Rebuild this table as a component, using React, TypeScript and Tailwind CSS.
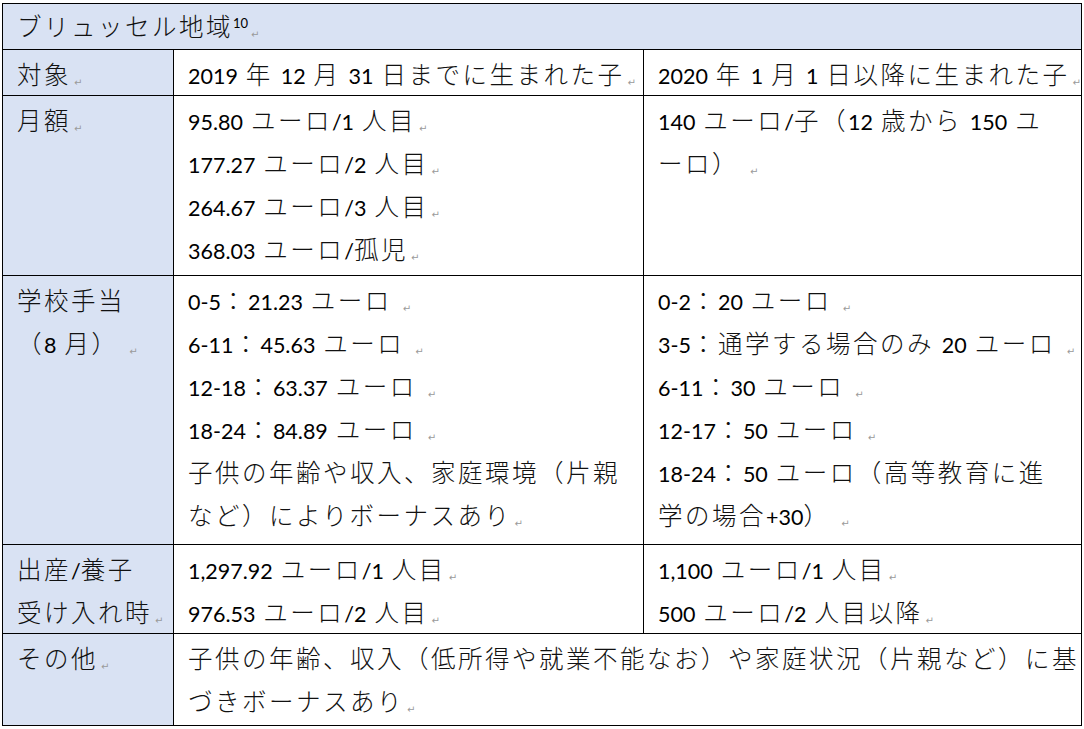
const LABEL = "bg-[#d9e2f3]";

// split a line into latin runs and CJK/space runs so each gets its own metrics
function Runs({ text }: { text: string }) {
  const parts = text.match(/[\x21-\x7e]+|[^\x21-\x7e]+/g) ?? [];
  return (
    <>
      {parts.map((p, i) =>
        /[\x21-\x7e]/.test(p[0]) ? (
          <span key={i} className="font-['Lato'] text-[21.5px] text-black">
            {p}
          </span>
        ) : (
          <span
            key={i}
            className="font-['Noto_Sans_CJK_JP'] text-[24.5px] font-light tracking-[2.5px] text-[#111]"
          >
            {p}
          </span>
        )
      )}
    </>
  );
}

function Mark() {
  return (
    <span className="ml-[3px] align-[-2px] font-['DejaVu_Sans'] text-[10px] text-[#9a9a9a]">
      ↵
    </span>
  );
}

function Line({ text, mark = true }: { text: string; mark?: boolean }) {
  return (
    <div className="h-[43px] whitespace-nowrap leading-[43px]">
      <Runs text={text} />
      {mark && <Mark />}
    </div>
  );
}

function Cell({
  lines,
  label = false,
  span = false,
}: {
  lines: [string, boolean?][];
  label?: boolean;
  span?: boolean;
}) {
  return (
    <div
      className={`${label ? LABEL : "bg-white"} ${span ? "col-span-2" : ""} pl-[14px] pt-[2px]`}
    >
      {lines.map(([t, m], i) => (
        <Line key={i} text={t} mark={m ?? true} />
      ))}
    </div>
  );
}

export default function App() {
  return (
    <div className="min-h-[729px] w-[1084px] bg-white pt-[3px] pl-[2px]">
      <div className="grid w-[1080px] grid-cols-[170px_469px_437px] grid-rows-[45px_45px_179px_268px_88px_91px] gap-px bg-black p-px">
        <div className={`${LABEL} col-span-3 pl-[14px]`}>
          <div className="h-[43px] whitespace-nowrap leading-[43px]">
            <Runs text="ブリュッセル地域" />
            <span className="relative -top-[8px] font-['Lato'] text-[13px]">
              10
            </span>
            <Mark />
          </div>
        </div>

        <Cell label lines={[["対象"]]} />
        <Cell lines={[["2019 年 12 月 31 日までに生まれた子"]]} />
        <Cell lines={[["2020 年 1 月 1 日以降に生まれた子"]]} />

        <Cell label lines={[["月額"]]} />
        <Cell
          lines={[
            ["95.80 ユーロ/1 人目"],
            ["177.27 ユーロ/2 人目"],
            ["264.67 ユーロ/3 人目"],
            ["368.03 ユーロ/孤児"],
          ]}
        />
        <Cell
          lines={[
            ["140 ユーロ/子（12 歳から 150 ユ", false],
            ["ーロ） "],
          ]}
        />

        <Cell label lines={[["学校手当", false], ["（8 月） "]]} />
        <Cell
          lines={[
            ["0-5：21.23 ユーロ "],
            ["6-11：45.63 ユーロ "],
            ["12-18：63.37 ユーロ "],
            ["18-24：84.89 ユーロ "],
            ["子供の年齢や収入、家庭環境（片親", false],
            ["など）によりボーナスあり"],
          ]}
        />
        <Cell
          lines={[
            ["0-2：20 ユーロ "],
            ["3-5：通学する場合のみ 20 ユーロ "],
            ["6-11：30 ユーロ "],
            ["12-17：50 ユーロ "],
            ["18-24：50 ユーロ（高等教育に進", false],
            ["学の場合+30） "],
          ]}
        />

        <Cell label lines={[["出産/養子", false], ["受け入れ時"]]} />
        <Cell lines={[["1,297.92 ユーロ/1 人目"], ["976.53 ユーロ/2 人目"]]} />
        <Cell lines={[["1,100 ユーロ/1 人目"], ["500 ユーロ/2 人目以降"]]} />

        <Cell label lines={[["その他"]]} />
        <Cell
          span
          lines={[
            ["子供の年齢、収入（低所得や就業不能なお）や家庭状況（片親など）に基", false],
            ["づきボーナスあり"],
          ]}
        />
      </div>
    </div>
  );
}
